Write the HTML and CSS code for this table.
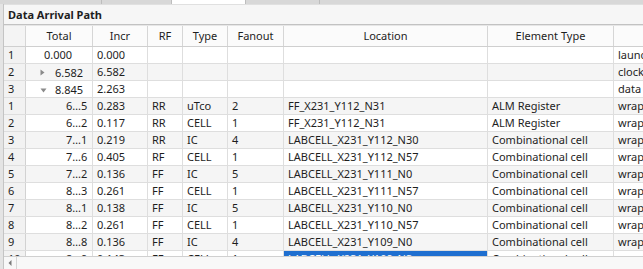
FILE: index.html
```html
<!DOCTYPE html>
<html>
<head>
<meta charset="utf-8">
<link rel="stylesheet" href="styles.css">
</head>
<body>
<div class="tabs">
  <div class="tab t1"></div>
  <div class="tab t2"></div>
  <div class="tab t3 active"></div>
  <div class="tab t4"></div>
</div>
<div class="panel">
  <div class="title">Data Arrival Path</div>
  <div class="view">
    <div class="row head">
      <div class="c num"></div>
      <div class="c">Total</div>
      <div class="c">Incr</div>
      <div class="c">RF</div>
      <div class="c">Type</div>
      <div class="c">Fanout</div>
      <div class="c">Location</div>
      <div class="c">Element Type</div>
      <div class="c"></div>
    </div>
    <div class="body">
      <div class="row">
        <div class="c num">1</div><div class="c top">0.000</div><div class="c">0.000</div><div class="c"></div><div class="c"></div><div class="c"></div><div class="c"></div><div class="c"></div><div class="c">launch edge time</div>
      </div>
      <div class="row alt">
        <div class="c num">2</div><div class="c top"><span class="br"><svg width="5" height="7" viewBox="0 0 5 7"><path d="M0.5 0.5 L4.5 3.5 L0.5 6.5 Z" fill="#8a8a8a"/></svg></span>6.582</div><div class="c">6.582</div><div class="c"></div><div class="c"></div><div class="c"></div><div class="c"></div><div class="c"></div><div class="c">clock path</div>
      </div>
      <div class="row">
        <div class="c num">3</div><div class="c top"><span class="br"><svg width="7" height="5" viewBox="0 0 7 5"><path d="M0.5 0.5 L6.5 0.5 L3.5 4.5 Z" fill="#8a8a8a"/></svg></span>8.845</div><div class="c">2.263</div><div class="c"></div><div class="c"></div><div class="c"></div><div class="c"></div><div class="c"></div><div class="c">data path</div>
      </div>
      <div class="row alt">
        <div class="c num">1</div><div class="c child">6…5</div><div class="c">0.283</div><div class="c">RR</div><div class="c">uTco</div><div class="c">2</div><div class="c">FF_X231_Y112_N31</div><div class="c">ALM Register</div><div class="c">wrapper</div>
      </div>
      <div class="row">
        <div class="c num">2</div><div class="c child">6…2</div><div class="c">0.117</div><div class="c">RR</div><div class="c">CELL</div><div class="c">1</div><div class="c">FF_X231_Y112_N31</div><div class="c">ALM Register</div><div class="c">wrapper</div>
      </div>
      <div class="row alt">
        <div class="c num">3</div><div class="c child">7…1</div><div class="c">0.219</div><div class="c">RR</div><div class="c">IC</div><div class="c">4</div><div class="c">LABCELL_X231_Y112_N30</div><div class="c">Combinational cell</div><div class="c">wrapper</div>
      </div>
      <div class="row">
        <div class="c num">4</div><div class="c child">7…6</div><div class="c">0.405</div><div class="c">RF</div><div class="c">CELL</div><div class="c">1</div><div class="c">LABCELL_X231_Y112_N57</div><div class="c">Combinational cell</div><div class="c">wrapper</div>
      </div>
      <div class="row alt">
        <div class="c num">5</div><div class="c child">7…2</div><div class="c">0.136</div><div class="c">FF</div><div class="c">IC</div><div class="c">5</div><div class="c">LABCELL_X231_Y111_N0</div><div class="c">Combinational cell</div><div class="c">wrapper</div>
      </div>
      <div class="row">
        <div class="c num">6</div><div class="c child">8…3</div><div class="c">0.261</div><div class="c">FF</div><div class="c">CELL</div><div class="c">1</div><div class="c">LABCELL_X231_Y111_N57</div><div class="c">Combinational cell</div><div class="c">wrapper</div>
      </div>
      <div class="row alt">
        <div class="c num">7</div><div class="c child">8…1</div><div class="c">0.138</div><div class="c">FF</div><div class="c">IC</div><div class="c">5</div><div class="c">LABCELL_X231_Y110_N0</div><div class="c">Combinational cell</div><div class="c">wrapper</div>
      </div>
      <div class="row">
        <div class="c num">8</div><div class="c child">8…2</div><div class="c">0.261</div><div class="c">FF</div><div class="c">CELL</div><div class="c">1</div><div class="c">LABCELL_X231_Y110_N57</div><div class="c">Combinational cell</div><div class="c">wrapper</div>
      </div>
      <div class="row alt">
        <div class="c num">9</div><div class="c child">8…8</div><div class="c">0.136</div><div class="c">FF</div><div class="c">IC</div><div class="c">4</div><div class="c">LABCELL_X231_Y109_N0</div><div class="c">Combinational cell</div><div class="c">wrapper</div>
      </div>
      <div class="row">
        <div class="c num">10</div><div class="c child">8…9</div><div class="c">0.143</div><div class="c">FF</div><div class="c">CELL</div><div class="c">1</div><div class="c sel">LABCELL_X231_Y109_N3</div><div class="c">Combinational cell</div><div class="c">wrapper</div>
      </div>
    </div>
  </div>
  <div class="hscroll">
    <div class="arrow"><svg width="4" height="6" viewBox="0 0 4 6"><path d="M3.5 0 L0.5 3 L3.5 6 Z" fill="#7a7a7a"/></svg></div>
    <div class="track"></div>
  </div>
</div>
</body>
</html>
```

FILE: styles.css
```css
html, body {
  margin: 0;
  padding: 0;
}
body {
  width: 643px;
  height: 269px;
  overflow: hidden;
  background: #e4e4e4;
  font-family: "Noto Sans", "Open Sans", sans-serif;
  font-size: 11px;
  color: #1e1e1e;
}
.tabs {
  height: 4px;
  display: flex;
  background: #d8d8d8;
}
.tab {
  height: 4px;
  border-right: 1px solid #bdbdbd;
  box-sizing: border-box;
}
.t1 { width: 102px; }
.t2 { width: 70px; }
.t3 { width: 74px; }
.t4 { width: 74px; }
.tab.active { background: #ffffff; }
.panel {
  margin-left: 3px;
  border-left: 1px solid #c4c4c4;
  background: #ffffff;
  height: 265px;
  display: flex;
  flex-direction: column;
}
.title {
  height: 19px;
  line-height: 19px;
  padding-left: 4px;
  font-weight: 700;
  background: #f6f6f6;
  border-bottom: 1px solid #c2c2c2;
  border-top: 1px solid #e0e0e0;
  box-sizing: content-box;
  flex: none;
}
.view {
  flex: 1;
  overflow: hidden;
  background: #ffffff;
}
.row {
  display: grid;
  grid-template-columns: 22px 67px 55px 35px 45px 56px 204px 126px 120px;
  height: 17px;
  box-sizing: border-box;
  border-bottom: 1px solid #dedede;
  width: max-content;
}
.row.alt { background: #f5f5f5; }
.c {
  border-right: 1px solid #dedede;
  padding-left: 4px;
  line-height: 16px;
  white-space: nowrap;
  overflow: hidden;
  box-sizing: border-box;
}
.c.num {
  background: #f2f2f2;
  border-right: 1px solid #d2d2d2;
}
.c.top {
  padding-left: 18px;
  position: relative;
}
.br {
  display: inline-block;
  width: 11px;
  margin-left: -4px;
  margin-right: 4px;
  vertical-align: 1px;
}
.c.child { padding-left: 40px; }
.c.sel {
  background: #1f6fd0;
  color: #ffffff;
}
.head {
  height: 22px;
  border-top: 1px solid #e6e6e6;
  border-bottom: 1px solid #cfcfcf;
  background: #fbfbfb;
}
.head .c {
  text-align: center;
  line-height: 20px;
  padding-left: 0;
  border-right: 1px solid #d6d6d6;
}
.head .c.num { background: #f4f4f4; }
.hscroll {
  flex: none;
  height: 13px;
  display: flex;
  border-top: 1px solid #d0d0d0;
  background: #f8f8f8;
  box-sizing: border-box;
}
.arrow {
  width: 12px;
  border-right: 1px solid #d6d6d6;
  display: flex;
  align-items: center;
  justify-content: center;
}
.track { flex: 1; }
```
